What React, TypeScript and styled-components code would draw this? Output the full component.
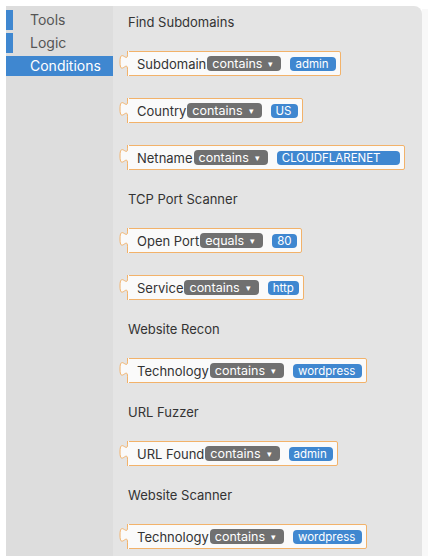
import styled, { createGlobalStyle } from "styled-components";

const GlobalStyle = createGlobalStyle`
  html, body {
    margin: 0;
    padding: 0;
    background: #ffffff;
  }
  body {
    font-family: Inter, "Noto Sans", sans-serif;
  }
`;

type Item =
  | { kind: "label"; text: string }
  | { kind: "block"; name: string; op: string; value: string; width: number };

const items: Item[] = [
  { kind: "label", text: "Find Subdomains" },
  { kind: "block", name: "Subdomain", op: "contains", value: "admin", width: 46 },
  { kind: "block", name: "Country", op: "contains", value: "US", width: 27 },
  { kind: "block", name: "Netname", op: "contains", value: "CLOUDFLARENET", width: 123 },
  { kind: "label", text: "TCP Port Scanner" },
  { kind: "block", name: "Open Port", op: "equals", value: "80", width: 23 },
  { kind: "block", name: "Service", op: "contains", value: "http", width: 31 },
  { kind: "label", text: "Website Recon" },
  { kind: "block", name: "Technology", op: "contains", value: "wordpress", width: 69 },
  { kind: "label", text: "URL Fuzzer" },
  { kind: "block", name: "URL Found", op: "contains", value: "admin", width: 44 },
  { kind: "label", text: "Website Scanner" },
  { kind: "block", name: "Technology", op: "contains", value: "wordpress", width: 69 },
];

const categories = ["Tools", "Logic", "Conditions"];

function OutputTab() {
  return (
    <Tab width="10" height="25" viewBox="0 0 10 25">
      <path d="M8.5,0 V3.5 c0,9 -7.5,-7 -7.5,7.5 s7.5,-2.5 7.5,7.5 V25 H10 V0 Z" fill="#fafafa" />
      <path
        d="M8.5,0 V3.5 c0,9 -7.5,-7 -7.5,7.5 s7.5,-2.5 7.5,7.5 V25"
        fill="none"
        stroke="#f2b26a"
        strokeWidth="1"
      />
    </Tab>
  );
}

export default function App() {
  return (
    <>
      <GlobalStyle />
      <Page>
        <Toolbox>
          {categories.map((c) => (
            <Category key={c} $selected={c === "Conditions"}>
              <Marker />
              <CategoryLabel>{c}</CategoryLabel>
            </Category>
          ))}
        </Toolbox>
        <Flyout>
          {items.map((it, i) =>
            it.kind === "label" ? (
              <SectionLabel key={i}>{it.text}</SectionLabel>
            ) : (
              <Block key={i}>
                <OutputTab />
                <BlockLabel>{it.name}</BlockLabel>
                <Dropdown>
                  {it.op}
                  <DropArrow>▾</DropArrow>
                </Dropdown>
                <ValueField $width={it.width}>{it.value}</ValueField>
              </Block>
            )
          )}
        </Flyout>
        <Edge />
      </Page>
    </>
  );
}

const Page = styled.div`
  display: flex;
  height: 556px;
  padding: 6px 0 0 6px;
  box-sizing: border-box;
  overflow: hidden;
  background: #ffffff;
`;

const Toolbox = styled.div`
  width: 107px;
  flex-shrink: 0;
  background: #dddddd;
  padding-top: 4px;
  display: flex;
  flex-direction: column;
  gap: 3px;
`;

const Category = styled.div<{ $selected: boolean }>`
  display: flex;
  align-items: center;
  height: 20px;
  background: ${(p) => (p.$selected ? "#3f87d0" : "transparent")};
  color: ${(p) => (p.$selected ? "#ffffff" : "#555555")};
`;

const Marker = styled.div`
  width: 7px;
  height: 100%;
  background: #3f87d0;
`;

const CategoryLabel = styled.span`
  margin-left: 17px;
  font-size: 14px;
  line-height: 20px;
`;

const Flyout = styled.div`
  width: 309px;
  flex-shrink: 0;
  background: #e4e4e4;
  border-top-right-radius: 8px;
  padding: 9px 0 0 15px;
  box-sizing: border-box;
  display: flex;
  flex-direction: column;
  align-items: flex-start;
  gap: 22px;
`;

const Edge = styled.div`
  flex: 1;
  background: #f8f8f8;
  margin-top: 3px;
`;

const SectionLabel = styled.div`
  font-size: 13px;
  line-height: 14px;
  height: 14px;
  color: #333333;
`;

const Block = styled.div`
  position: relative;
  margin-left: -1px;
  height: 25px;
  box-sizing: border-box;
  display: flex;
  align-items: center;
  padding: 0 4px 0 9px;
  background: #fafafa;
  border: 1px solid #f2b26a;
  border-radius: 2px;
`;

const Tab = styled.svg`
  position: absolute;
  left: -9px;
  top: -1px;
`;

const BlockLabel = styled.span`
  font-size: 13px;
  color: #333333;
  padding-right: 1px;
  white-space: nowrap;
`;

const Dropdown = styled.span`
  display: flex;
  align-items: center;
  height: 15px;
  padding: 0 8px 0 5px;
  background: #707070;
  border-radius: 4px;
  color: #ffffff;
  font-size: 12.5px;
  line-height: 15px;
`;

const DropArrow = styled.span`
  font-size: 9px;
  margin-left: 6px;
`;

const ValueField = styled.span<{ $width: number }>`
  min-width: ${(p) => p.$width}px;
  box-sizing: border-box;
  height: 14px;
  margin-left: 9px;
  padding: 0 5px;
  background: #3f87d0;
  border-radius: 4px;
  color: #ffffff;
  font-size: 11.5px;
  line-height: 14px;
  text-align: left;
  white-space: nowrap;
`;
